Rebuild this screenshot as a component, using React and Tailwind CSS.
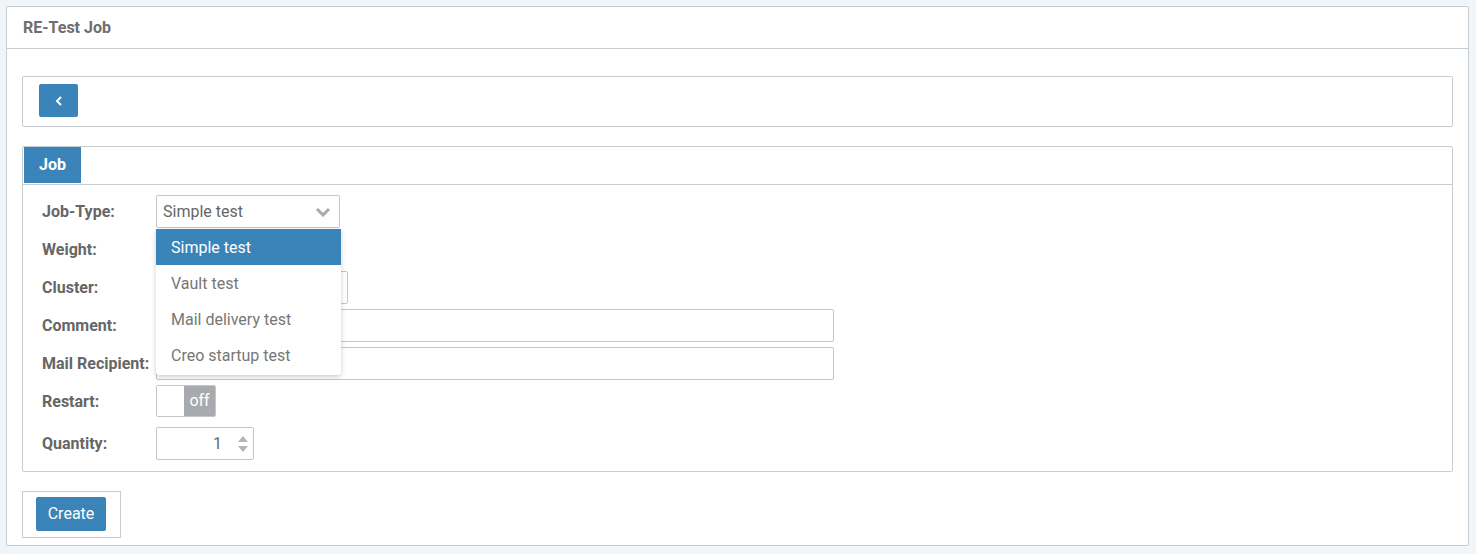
import React, { useState } from "react";

const options = ["Simple test", "Vault test", "Mail delivery test", "Creo startup test"];

function Row({ label, children }) {
  return (
    <div className="flex items-center h-[33px]">
      <label className="w-[114px] pt-px text-[16px] font-bold text-[#666] whitespace-nowrap">{label}</label>
      {children}
    </div>
  );
}

export default function App() {
  const [jobType, setJobType] = useState("Simple test");
  const [open, setOpen] = useState(true);

  const inputClass = "h-[33px] border border-[#c3c7cb] rounded-[2px] bg-white px-2 text-[16px] text-[#666] outline-none";

  return (
    <div className="min-h-screen bg-[#eff5f9] pt-[6px] pl-[6px] pr-[7px] pb-[8px] font-['Roboto',sans-serif]">
      <div className="bg-white border border-[#c8cdd2] rounded-[2px]">
        {/* Header */}
        <div className="h-[42px] border-b border-[#c8cdd2] flex items-center px-4">
          <h2 className="text-[16px] font-bold text-[#6e6e6e]">RE-Test Job</h2>
        </div>

        <div className="pt-[27px] px-[15px] pb-[7px]">
          {/* back bar */}
          <div className="h-[51px] border border-[#c8cdd2] rounded-[2px] pl-4 pt-[7px]">
            <button className="w-[39px] h-[33px] rounded-[2px] bg-[#3a84ba] flex items-center justify-center">
              <svg width="8" height="10" viewBox="0 0 8 10">
                <path d="M6 1 L2 5 L6 9" stroke="white" strokeWidth="2" fill="none" />
              </svg>
            </button>
          </div>

          {/* Job panel */}
          <div className="mt-[19px] border border-[#c8cdd2] rounded-[2px]">
            <div className="h-[38px] border-b border-[#c8cdd2] pl-px">
              <div className="w-[57px] h-[36px] bg-[#3a84ba] text-white text-[16px] font-bold flex items-center justify-center">
                Job
              </div>
            </div>

            <div className="pt-[10px] pb-[11px] pl-[19px] flex flex-col gap-[5px]">
              <Row label="Job-Type:">
                <div className="relative">
                  <button
                    onClick={() => setOpen(!open)}
                    className="w-[184px] h-[33px] border border-[#c3c7cb] rounded-[2px] bg-white pl-[6px] pr-2 pt-px flex items-center justify-between text-[16px] text-[#666]"
                  >
                    <span>{jobType}</span>
                    <svg width="16" height="10" viewBox="0 0 16 10">
                      <path d="M2 2 L8 8 L14 2" stroke="#aaa" strokeWidth="3" fill="none" />
                    </svg>
                  </button>
                  {open && (
                    <ul className="absolute left-0 top-[34px] w-[185px] bg-white rounded-b-[3px] shadow-[0_2px_5px_rgba(0,0,0,0.2)] z-10 pb-[2px]">
                      {options.map((o) => (
                        <li
                          key={o}
                          onClick={() => { setJobType(o); setOpen(false); }}
                          className={`h-[36px] flex items-center pl-[15px] pt-px text-[16px] cursor-pointer ${o === jobType ? "bg-[#3a84ba] text-white" : "text-[#777]"}`}
                        >
                          {o}
                        </li>
                      ))}
                    </ul>
                  )}
                </div>
              </Row>
              <Row label="Weight:">
                <input className={`${inputClass} w-[150px]`} />
              </Row>
              <Row label="Cluster:">
                <input className={`${inputClass} w-[192px]`} />
              </Row>
              <Row label="Comment:">
                <input className={`${inputClass} w-[678px]`} />
              </Row>
              <Row label="Mail Recipient:">
                <input className={`${inputClass} w-[678px]`} />
              </Row>
              <div className="flex items-center h-[32px]">
                <label className="w-[114px] pt-px text-[16px] font-bold text-[#666]">Restart:</label>
                <div className="w-[60px] h-[32px] border border-[#c3c7cb] rounded-[2px] flex overflow-hidden">
                  <div className="w-[27px] bg-white" />
                  <div className="flex-1 bg-[#a8aaad] text-white text-[16px] flex items-center justify-center">off</div>
                </div>
              </div>
              <div className="flex items-center h-[33px] mt-[5px]">
                <label className="w-[114px] text-[16px] font-bold text-[#666]">Quantity:</label>
                <div className="w-[98px] h-[33px] border border-[#c3c7cb] rounded-[2px] flex items-center justify-end">
                  <span className="text-[16px] text-[#666] mr-[16px]">1</span>
                  <div className="flex flex-col gap-[4px] mr-[5px]">
                    <svg width="10" height="6" viewBox="0 0 10 6"><path d="M0 6 L5 0 L10 6Z" fill="#b5b5b5" /></svg>
                    <svg width="10" height="6" viewBox="0 0 10 6"><path d="M0 0 L5 6 L10 0Z" fill="#b5b5b5" /></svg>
                  </div>
                </div>
              </div>
            </div>
          </div>

          {/* Create */}
          <div className="mt-[19px] w-[99px] h-[47px] border border-[#c8cdd2] pl-[13px] pt-[5px]">
            <button className="w-[70px] h-[34px] rounded-[2px] bg-[#3a84ba] text-white text-[16px]">Create</button>
          </div>
        </div>
      </div>
    </div>
  );
}
